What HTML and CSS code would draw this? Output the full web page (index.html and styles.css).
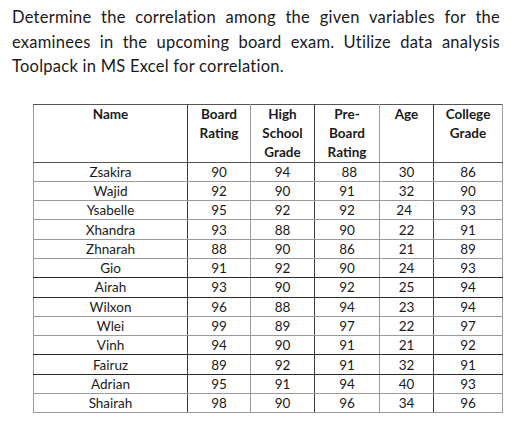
FILE: index.html
```html
<!DOCTYPE html>
<html>
<head>
<meta charset="utf-8">
<link rel="stylesheet" href="styles.css">
</head>
<body>
<p class="prompt">Determine the correlation among the given variables for the examinees in the upcoming board exam. Utilize data analysis Toolpack in MS Excel for correlation.</p>
<table class="data">
  <colgroup>
    <col class="c-name"><col class="c-board"><col class="c-high"><col class="c-pre"><col class="c-age"><col class="c-college">
  </colgroup>
  <thead>
    <tr>
      <th class="dk-r">Name</th>
      <th>Board<br>Rating</th>
      <th class="dk-r">High<br>School<br>Grade</th>
      <th>Pre-<br>Board<br>Rating</th>
      <th class="dk-r">Age</th>
      <th>College<br>Grade</th>
    </tr>
  </thead>
  <tbody>
    <tr><td class="dk-r">Zsakira</td><td>90</td><td class="dk-r">94</td><td><span class="speck">·</span>88</td><td class="dk-r">30</td><td>86</td></tr>
    <tr><td class="dk-r">Wajid</td><td>92</td><td class="dk-r">90</td><td>91</td><td class="dk-r">32</td><td>90</td></tr>
    <tr><td class="dk-r">Ysabelle</td><td>95</td><td class="dk-r">92</td><td>92</td><td class="dk-r">24<span class="speck sup">'</span></td><td>93</td></tr>
    <tr><td class="dk-r">Xhandra</td><td>93</td><td class="dk-r">88</td><td>90</td><td class="dk-r">22</td><td>91</td></tr>
    <tr><td class="dk-r">Zhnarah</td><td>88</td><td class="dk-r">90</td><td>86</td><td class="dk-r">21</td><td>89</td></tr>
    <tr class="dk-b"><td class="dk-r">Gio</td><td>91</td><td class="dk-r">92</td><td>90</td><td class="dk-r">24</td><td>93</td></tr>
    <tr class="dk-b"><td class="dk-r">Airah</td><td>93</td><td class="dk-r">90</td><td>92</td><td class="dk-r">25</td><td>94</td></tr>
    <tr><td class="dk-r">Wilxon</td><td>96</td><td class="dk-r">88</td><td>94</td><td class="dk-r">23</td><td>94</td></tr>
    <tr><td class="dk-r">Wlei</td><td>99</td><td class="dk-r">89</td><td>97</td><td class="dk-r">22</td><td>97</td></tr>
    <tr class="dk-b"><td class="dk-r">Vinh</td><td>94</td><td class="dk-r">90</td><td>91</td><td class="dk-r">21</td><td>92</td></tr>
    <tr class="dk-b"><td class="dk-r">Fairuz</td><td>89</td><td class="dk-r">92</td><td>91</td><td class="dk-r">32</td><td>91</td></tr>
    <tr><td class="dk-r">Adrian</td><td>95</td><td class="dk-r">91</td><td>94</td><td class="dk-r">40</td><td>93</td></tr>
    <tr><td class="dk-r">Shairah</td><td>98</td><td class="dk-r">90</td><td>96</td><td class="dk-r">34</td><td>96</td></tr>
  </tbody>
</table>
</body>
</html>
```

FILE: styles.css
```css
html, body {
  margin: 0;
  padding: 0;
  background: #ffffff;
}
body {
  font-family: Lato, "Open Sans", sans-serif;
  color: #1a1a1a;
  padding: 5px 0 0 12px;
}
.prompt {
  margin: 0;
  width: 488px;
  font-size: 16.5px;
  line-height: 24.5px;
  text-align: justify;
  letter-spacing: 0.25px;
}
.data {
  margin: 25px 0 0 21px;
  border-collapse: collapse;
  table-layout: fixed;
  width: 469px;
  font-size: 13.5px;
}
.c-name { width: 154px; }
.c-board { width: 63px; }
.c-high { width: 64px; }
.c-pre { width: 65px; }
.c-age { width: 54px; }
.c-college { width: 69px; }
.data th, .data td {
  border: 1px solid #9a9a9a;
  text-align: center;
  padding: 0;
}
.data thead tr {
  height: 57px;
}
.data th {
  vertical-align: top;
  font-weight: 700;
  line-height: 19px;
  border-bottom-color: #555;
  border-top-color: #555;
}
.data td {
  height: 18.3px;
  line-height: 18px;
  vertical-align: middle;
}
.data .dk-r {
  border-right-color: #3a3a3a;
}
.data tr.dk-b td {
  border-bottom-color: #2a2a2a;
}
.speck {
  color: #bdbdbd;
  font-size: 10px;
  line-height: 0;
  margin-right: 2px;
}
.speck.sup {
  margin: 0 0 0 3px;
  vertical-align: 4px;
  font-size: 8px;
}
```
